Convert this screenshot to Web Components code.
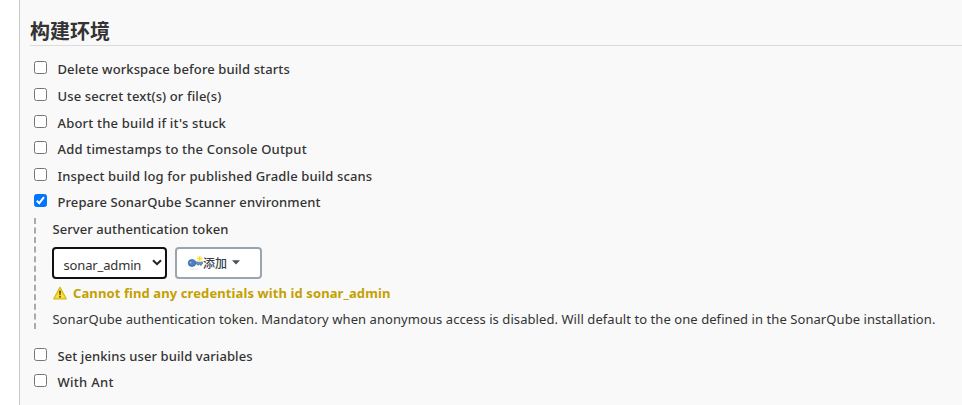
<!DOCTYPE html>
<html lang="zh">
<head>
<meta charset="utf-8">
<title>构建环境</title>
<style>
html,body{margin:0;height:100%;overflow:hidden;background:#fff}
body{font:400 13px/20px "Noto Sans","Noto Sans CJK SC",sans-serif;color:#333}
</style>
</head>
<body>
<config-section heading="构建环境">
  <check-row style="letter-spacing:.11px">Delete workspace before build starts</check-row>
  <check-row style="letter-spacing:.12px">Use secret text(s) or file(s)</check-row>
  <check-row style="letter-spacing:.2px">Abort the build if it's stuck</check-row>
  <check-row style="letter-spacing:.18px">Add timestamps to the Console Output</check-row>
  <check-row style="letter-spacing:.16px">Inspect build log for published Gradle build scans</check-row>
  <check-row checked style="letter-spacing:.1px">Prepare SonarQube Scanner environment</check-row>
  <nested-group label="Server authentication token">
    <select-box slot="controls" value="sonar_admin"></select-box>
    <add-button slot="controls">添加</add-button>
    <warning-line slot="message">Cannot find any credentials with id sonar_admin</warning-line>
    SonarQube authentication token. Mandatory when anonymous access is disabled. Will default to the one defined in the SonarQube installation.
  </nested-group>
  <check-row style="letter-spacing:.09px">Set jenkins user build variables</check-row>
  <check-row style="letter-spacing:.3px">With Ant</check-row>
</config-section>
<script>
function define(name, html) {
  customElements.define(name, class extends HTMLElement {
    connectedCallback() {
      if (this.shadowRoot) return;
      const root = this.attachShadow({ mode: 'open' });
      root.innerHTML = html;
      root.querySelectorAll('[data-attr]').forEach(n => {
        n.textContent = this.getAttribute(n.dataset.attr);
      });
    }
  });
}
define('config-section', `
<style>
:host{display:block;box-sizing:border-box;height:100vh;margin-left:19px;border-left:1px solid #c8c8c8;background:#f9f9f9;padding:16px 0 0 10px}
h2{margin:0 0 9.6px;height:29px;border-bottom:1px solid #dcdcdc;font:700 20px/30px "Noto Sans CJK SC",sans-serif}
</style>
<h2 data-attr="heading"></h2><slot></slot>`);
define('check-row', `
<style>
:host{display:flex;align-items:center;height:26.6px;padding-left:4px;font-weight:500;white-space:nowrap}
i{display:block;box-sizing:border-box;width:13px;height:13px;margin:-1.8px 10.5px 0 0;border:1px solid #767676;border-radius:2.5px;background:#fff;flex:none}
svg{display:none}
:host([checked]) i{border-color:#0075ff;background:#0075ff}
:host([checked]) svg{display:block;width:11px;height:11px}
span{margin-top:1px}
</style>
<i><svg viewBox="0 0 11 11"><path d="M1.800 5.800 4.200 8.200 9 2.200" fill="none" stroke="#fff" stroke-width="2"/></svg></i><span><slot></slot></span>`);
define('nested-group', `
<style>
:host{display:block;box-sizing:border-box;position:relative;height:126.800px;margin-left:22px;padding-top:3.500px;white-space:nowrap;letter-spacing:.068px}
svg{position:absolute;left:-18px;top:3px;width:2px;height:111px}
.label{font-weight:500;letter-spacing:.09px;height:20px;padding-left:.4px}
.controls{display:flex;gap:8px;margin:8px 0 4px}
.help{margin-top:6px;padding-left:.4px}
</style>
<svg viewBox="0 0 2 111"><path d="M1 0V111" stroke="#aaa" stroke-width="2" stroke-dasharray="6 3.540"/></svg>
<div class="label" data-attr="label"></div>
<div class="controls"><slot name="controls"></slot></div>
<slot name="message"></slot>
<div class="help"><slot></slot></div>`);
define('select-box', `
<style>
:host{display:flex;align-items:center;box-sizing:border-box;width:115px;height:32px;border:2px solid #101014;border-radius:4px;background:#fff;padding:5px 3px 0 9.500px;letter-spacing:-.15px;justify-content:space-between}
svg{width:10px;height:7px;margin-top:-6px}
</style>
<span data-attr="value"></span><svg viewBox="0 0 10 7"><path d="M1 1.200 5 5.200 9 1.200" fill="none" stroke="#222" stroke-width="2"/></svg>`);
define('add-button', `
<style>
:host{display:flex;align-items:center;box-sizing:border-box;width:87px;height:32px;border:2px solid #9aa5af;border-radius:4px;background:#fff;padding-left:10px;font:500 12px/20px "Noto Sans CJK SC",sans-serif;letter-spacing:0;color:#37414b}
.key{width:16px;height:16px;flex:none}
.caret{width:8px;height:5px;margin:0 0 1px 5px}
</style>
<svg class="key" viewBox="0 0 16 16">
<ellipse cx="6.500" cy="14" rx="5" ry=".8" fill="#ececec"/>
<path d="M8 6.900h7.500V9h-1v1.200H13V9h-1v1h-1.500V9H8z" fill="#6d97cf" stroke="#42699c" stroke-width=".6"/>
<ellipse cx="5" cy="8" rx="3.800" ry="3.500" fill="#4c7fc4" stroke="#38609a" stroke-width=".7"/>
<circle cx="3.600" cy="7.600" r=".8" fill="#b5cdec"/>
<circle cx="12.600" cy="3.700" r="3" fill="#fff3a0"/><path d="M12.600 1.200 13.400 2.900 15.100 3.700 13.400 4.500 12.600 6.200 11.800 4.500 10.100 3.700 11.800 2.900z" fill="#f6d838"/>
</svg><slot></slot>
<svg class="caret" viewBox="0 0 8 5"><path d="M0 .3H8L4 4.500Z" fill="#48525c"/></svg>`);
define('warning-line', `
<style>
:host{display:flex;align-items:center;height:20px;font-weight:700;letter-spacing:.1px;color:#c4a000}
svg{width:16px;height:16px;margin-right:5px}
</style>
<svg viewBox="0 0 16 16"><path d="M8 2.300 14.200 13.800H1.800Z" fill="#fbe12c" stroke="#d9b71a" stroke-width="1.300" stroke-linejoin="round"/><path d="M7.100 5.800H8.900L8.500 10.200H7.500Z" fill="#3c3820"/><circle cx="8" cy="11.800" r=".9" fill="#3c3820"/></svg><slot></slot>`);
</script>
</body>
</html>
